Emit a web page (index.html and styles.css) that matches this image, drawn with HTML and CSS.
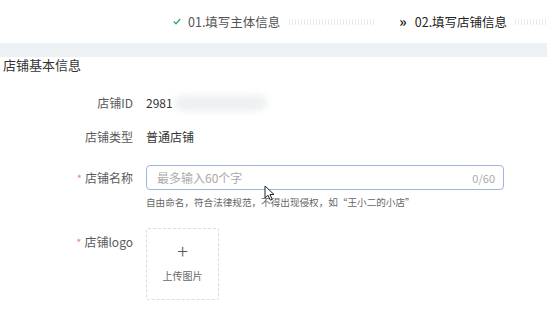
FILE: index.html
```html
<!DOCTYPE html>
<html lang="zh">
<head>
<meta charset="utf-8">
<link rel="stylesheet" href="styles.css">
</head>
<body>
<div class="steps">
  <div class="step done">
    <svg class="check" width="8" height="7" viewBox="0 0 8 7"><path d="M0.8 3.6 L3 5.8 L7.2 1" fill="none" stroke="#3aa66b" stroke-width="1.4"/></svg>
    <span>01.填写主体信息</span>
  </div>
  <div class="line l1"></div>
  <div class="step cur">
    <span class="arr">»</span>
    <span>02.填写店铺信息</span>
  </div>
  <div class="line l2"></div>
</div>
<div class="band"></div>
<div class="title">店铺基本信息</div>
<div class="form">
  <div class="row r-id">
    <div class="label">店铺ID</div>
    <div class="value">2981<span class="blur"></span></div>
  </div>
  <div class="row r-type">
    <div class="label">店铺类型</div>
    <div class="value">普通店铺</div>
  </div>
  <div class="row r-name">
    <div class="label"><span class="req">*</span>店铺名称</div>
    <div class="field">
      <div class="input">
        <span class="ph">最多输入60个字</span>
        <span class="count">0/60</span>
        <svg class="cursor" width="12" height="17" viewBox="0 0 12 17"><path d="M1 1 L1 13 L4 10.2 L6.3 15.2 L8.2 14.3 L6 9.5 L10 9.5 Z" fill="#fff" stroke="#222" stroke-width="1"/></svg>
      </div>
      <div class="help">自由命名，符合法律规范，不得出现侵权，如“王小二的小店”</div>
    </div>
  </div>
  <div class="row r-logo">
    <div class="label"><span class="req">*</span>店铺logo</div>
    <div class="upload">
      <div class="plus">+</div>
      <div class="up-text">上传图片</div>
    </div>
  </div>
</div>
</body>
</html>
```
FILE: styles.css
```css
* { box-sizing: border-box; }
body {
  margin: 0;
  background: #fff;
  font-family: "Noto Sans CJK SC", "Noto Sans", sans-serif;
  color: #333;
  width: 547px;
  height: 322px;
  overflow: hidden;
}
.steps {
  height: 43px;
  display: flex;
  align-items: center;
  padding-left: 173px;
  font-size: 12.5px;
}
.step { display: flex; align-items: center; white-space: nowrap; }
.step.done { color: #555; }
.step.done .check { margin-right: 7px; }
.step.cur { color: #222; }
.arr { font-weight: bold; font-size: 14px; margin-right: 8px; line-height: 1; position: relative; top: -1px; }
.line {
  height: 6px;
  background-image: repeating-linear-gradient(90deg, #e8eaec 0 1px, transparent 1px 3px);
}
.l1 { width: 85px; margin: 0 25px 0 9px; }
.l2 { flex: 1; margin-left: 8px; }
.band { height: 14px; background: #eef1f3; }
.title {
  padding-left: 3px;
  font-size: 13px;
  line-height: 16px;
  color: #333;
}
.form { display: flex; flex-direction: column; }
.row { display: flex; font-size: 12px; }
.label {
  width: 133px;
  text-align: right;
  color: #5a5a5a;
  flex: none;
}
.req { color: #e88a94; margin-right: 3px; font-size: 11px; }
.value, .field, .upload { margin-left: 13px; }
.r-id { margin-top: 20px; line-height: 20px; }
.r-type { margin-top: 14px; line-height: 20px; }
.value { color: #333; display: flex; align-items: center; }
.blur {
  display: inline-block;
  width: 92px;
  height: 16px;
  margin-left: 2px;
  background: #eef0f2;
  border-radius: 8px;
  filter: blur(3px);
}
.r-name { margin-top: 18px; }
.r-name .label { line-height: 25px; }
.field { width: 358px; }
.input {
  position: relative;
  height: 25px;
  border: 1px solid #9fb4e0;
  border-radius: 4px;
  display: flex;
  align-items: center;
  justify-content: space-between;
  padding: 0 8px 0 10px;
}
.ph { color: #aaa; font-size: 12px; }
.count { color: #aaa; font-size: 11px; }
.cursor { position: absolute; left: 117px; top: 19px; }
.help {
  margin-top: 5px;
  font-size: 9.6px;
  line-height: 14px;
  color: #666;
  white-space: nowrap;
}
.r-logo { margin-top: 19px; }
.r-logo .label { line-height: 28px; }
.upload {
  width: 73px;
  height: 72px;
  border: 1px dashed #dcdcdc;
  border-radius: 2px;
  display: flex;
  flex-direction: column;
  align-items: center;
}
.plus {
  margin-top: 8px;
  font-size: 20px;
  line-height: 28px;
  color: #555;
  font-weight: 300;
}
.up-text {
  margin-top: 4px;
  font-size: 10px;
  line-height: 14px;
  color: #666;
}
```
